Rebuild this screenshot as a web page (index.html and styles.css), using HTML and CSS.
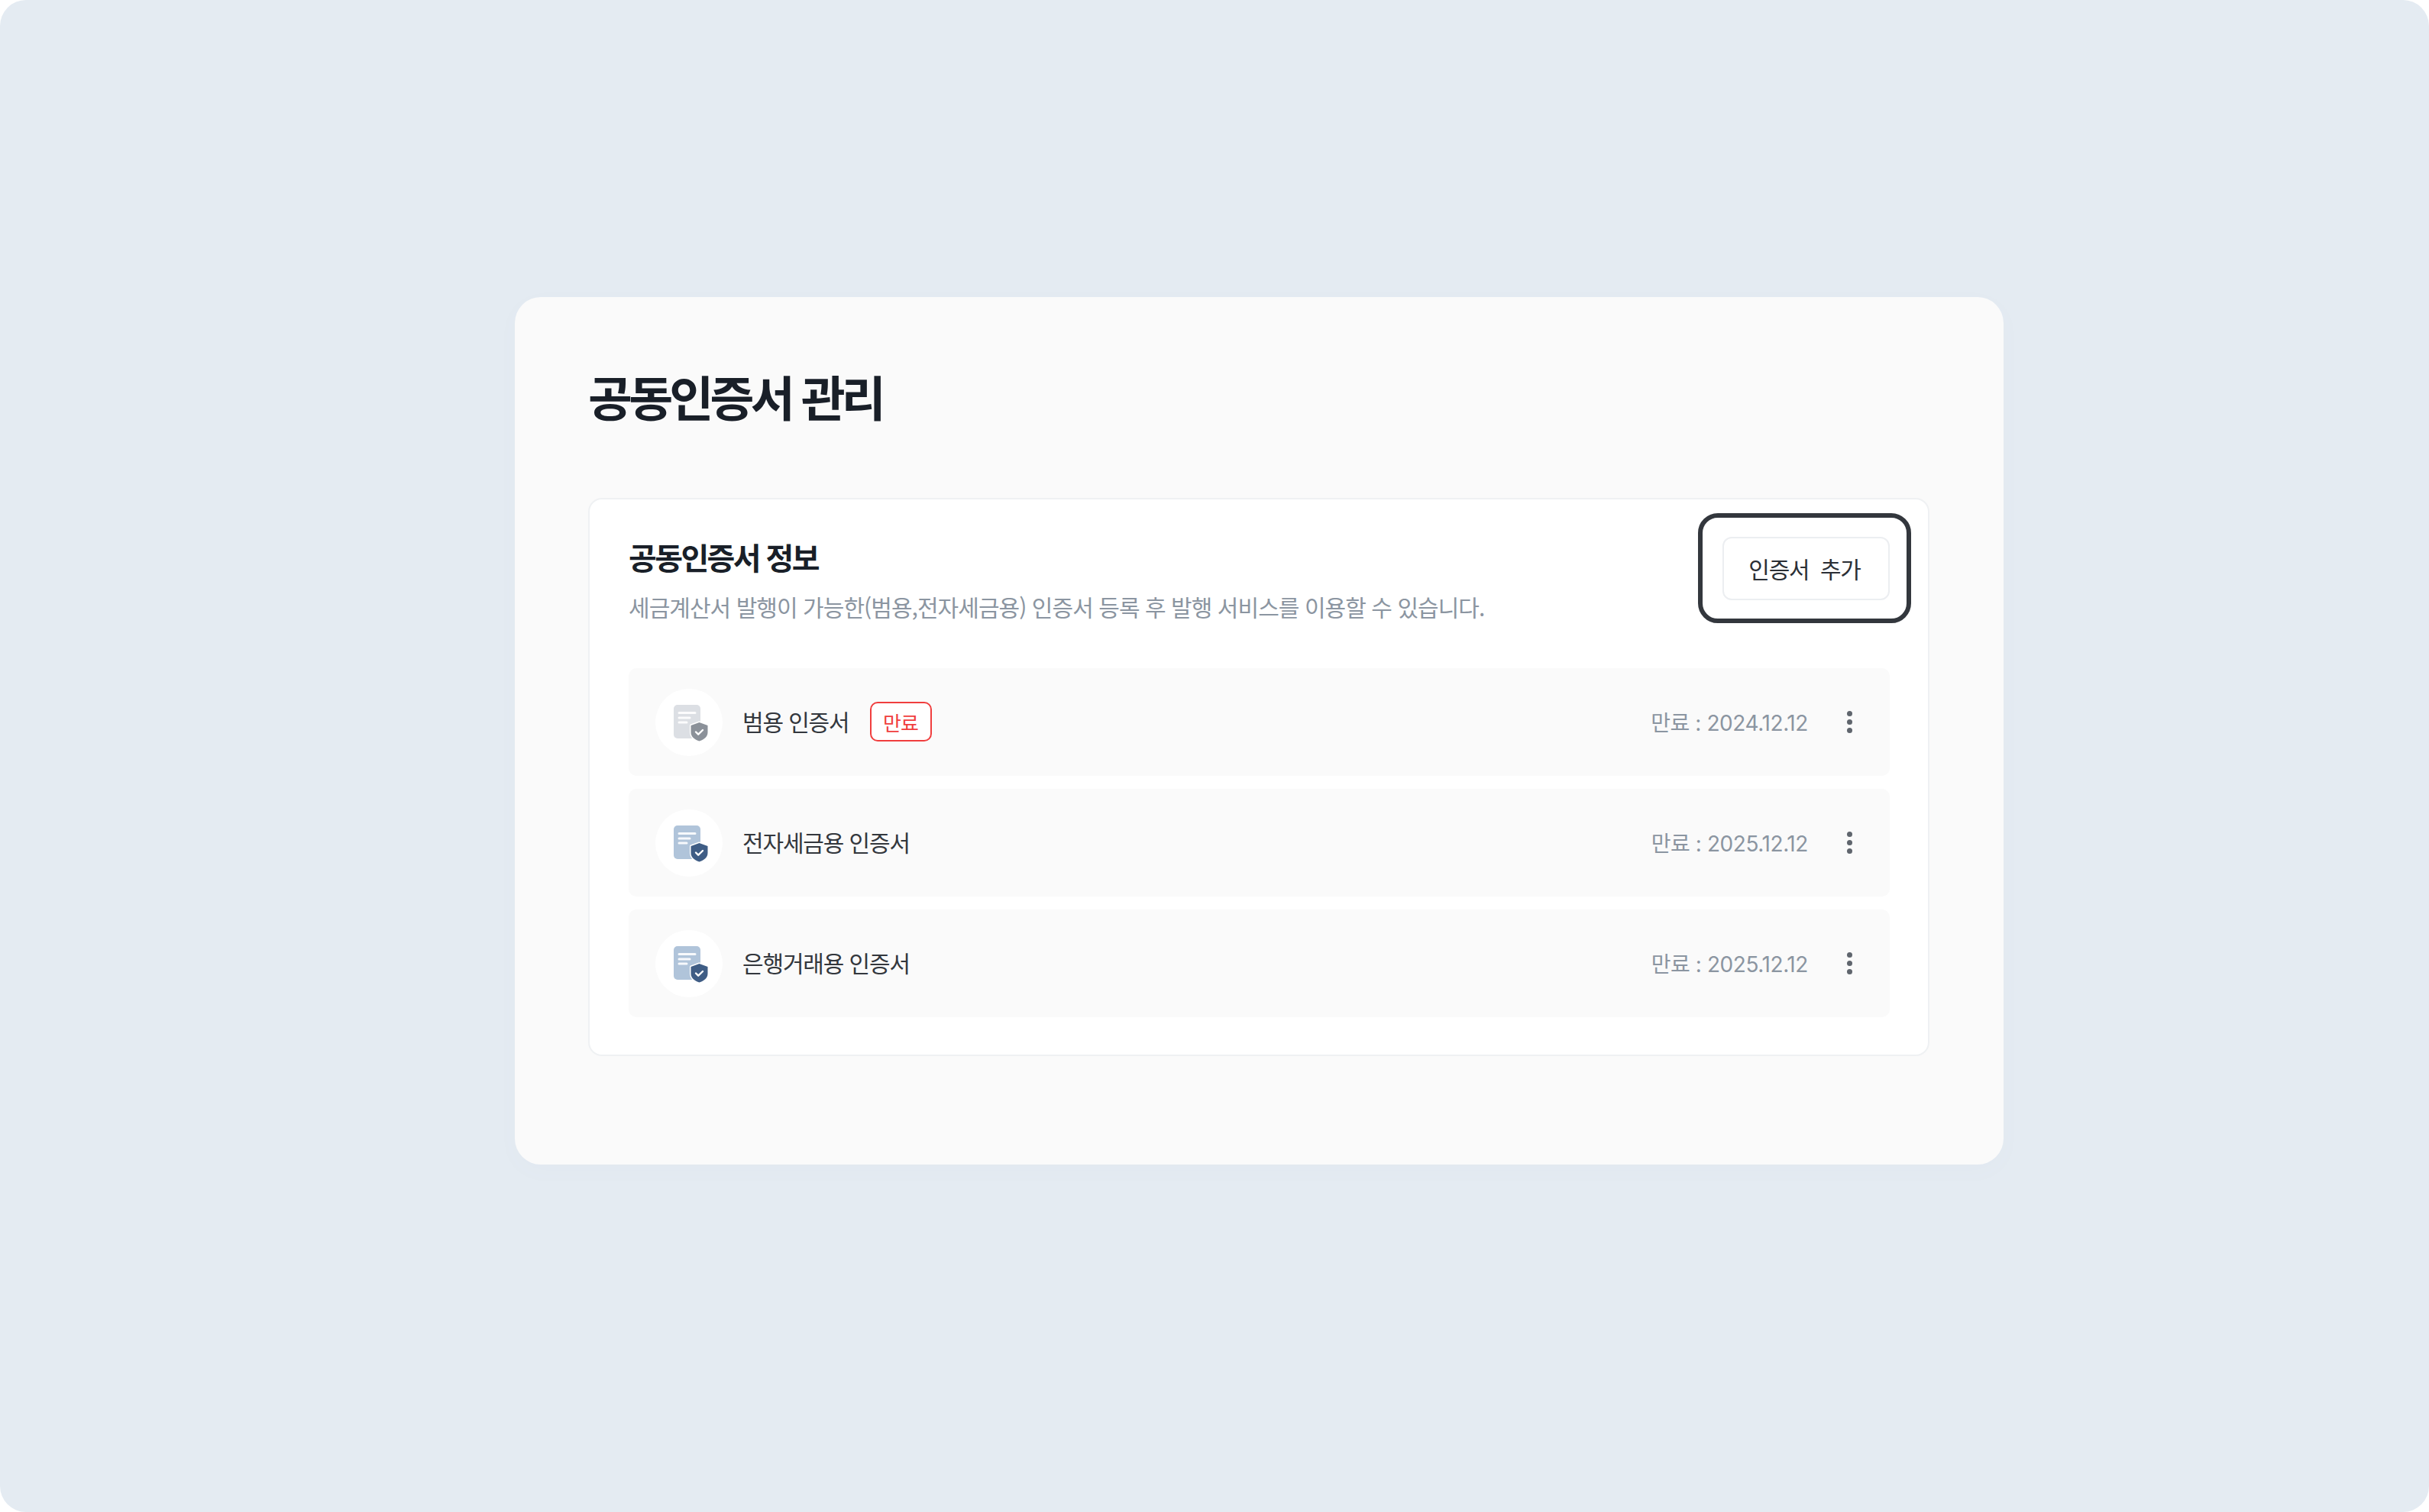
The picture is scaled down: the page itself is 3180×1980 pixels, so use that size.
FILE: index.html
```html
<!DOCTYPE html>
<html lang="ko">
<head>
<meta charset="utf-8">
<title>공동인증서 관리</title>
<link rel="stylesheet" href="styles.css">
</head>
<body>
<main class="stage">
  <section class="panel">
    <h1 class="page-title">공동인증서 관리</h1>
    <div class="info-card">
      <header class="info-head">
        <div class="info-text">
          <h2 class="info-title">공동인증서 정보</h2>
          <p class="info-desc">세금계산서 발행이 가능한(범용,전자세금용) 인증서 등록 후 발행 서비스를 이용할 수 있습니다.</p>
        </div>
        <div class="highlight"><button class="add-btn">인증서&nbsp; 추가</button></div>
      </header>
      <ul class="cert-list">
        <li class="cert-row">
          <span class="cert-icon expired">
            <svg width="48" height="50" viewBox="0 0 48 50"><rect class="doc" width="35" height="44" rx="5"/><path class="lines" d="M7 10.500h21M7 17h14M7 23h10"/><path class="shield" d="M33.500 23l11 4v9c0 6-5 9.500-11 11.500-6-2-11-5.500-11-11.500v-9z"/><path class="tick" d="M29 35.500l3.200 3.200 5.800-5.700"/></svg>
          </span>
          <span class="cert-name">범용 인증서</span>
          <span class="badge">만료</span>
          <span class="cert-date">만료 : 2024.12.12</span>
          <span class="more"><i></i><i></i><i></i></span>
        </li>
        <li class="cert-row">
          <span class="cert-icon active">
            <svg width="48" height="50" viewBox="0 0 48 50"><rect class="doc" width="35" height="44" rx="5"/><path class="lines" d="M7 10.500h21M7 17h14M7 23h10"/><path class="shield" d="M33.500 23l11 4v9c0 6-5 9.500-11 11.500-6-2-11-5.500-11-11.500v-9z"/><path class="tick" d="M29 35.500l3.200 3.200 5.800-5.700"/></svg>
          </span>
          <span class="cert-name">전자세금용 인증서</span>
          <span class="cert-date">만료 : 2025.12.12</span>
          <span class="more"><i></i><i></i><i></i></span>
        </li>
        <li class="cert-row">
          <span class="cert-icon active">
            <svg width="48" height="50" viewBox="0 0 48 50"><rect class="doc" width="35" height="44" rx="5"/><path class="lines" d="M7 10.500h21M7 17h14M7 23h10"/><path class="shield" d="M33.500 23l11 4v9c0 6-5 9.500-11 11.500-6-2-11-5.500-11-11.500v-9z"/><path class="tick" d="M29 35.500l3.200 3.200 5.800-5.700"/></svg>
          </span>
          <span class="cert-name">은행거래용 인증서</span>
          <span class="cert-date">만료 : 2025.12.12</span>
          <span class="more"><i></i><i></i><i></i></span>
        </li>
      </ul>
    </div>
  </section>
</main>
</body>
</html>
```
FILE: styles.css
```css
* { box-sizing: border-box; }
html, body { margin: 0; padding: 0; background: #fff; }
body { font-family: Inter, "Noto Sans CJK KR", sans-serif; }
.stage {
  width: 3180px;
  height: 1980px;
  background: #e4ebf2;
  border-radius: 34px;
  padding: 389px 557px 0 674px;
  overflow: hidden;
}
.panel {
  height: 1136px;
  background: #fafafa;
  border-radius: 34px;
  padding: 90px 97px 0 96px;
  box-shadow: 0 8px 30px rgba(120, 140, 170, 0.025);
}
.page-title {
  margin: 0;
  height: 79px;
  font-family: "Noto Sans CJK KR", sans-serif;
  font-size: 63px;
  line-height: 77px;
  font-weight: 700;
  letter-spacing: -4.8px;
  color: #191f28;
}
.info-card {
  margin-top: 94px;
  height: 731px;
  background: #fff;
  border: 2px solid #eff1f3;
  border-radius: 18px;
  padding: 18px 50px 0 51px;
}
.info-head {
  display: flex;
  justify-content: space-between;
  align-items: flex-start;
  height: 203px;
}
.info-text { padding-top: 29px; }
.info-title {
  margin: 0;
  font-family: "Noto Sans CJK KR", sans-serif;
  font-size: 40px;
  line-height: 56px;
  font-weight: 700;
  letter-spacing: -2.6px;
  color: #191f28;
}
.info-desc {
  margin: 15px 0 0;
  font-family: "Noto Sans CJK KR", sans-serif;
  font-size: 30px;
  line-height: 44px;
  font-weight: 400;
  letter-spacing: -0.95px;
  color: #8b95a1;
}
.highlight {
  display: flex;
  align-items: center;
  justify-content: center;
  width: 279px;
  height: 144px;
  margin-right: -28px;
  border: 6px solid #33373d;
  border-radius: 26px;
  padding-left: 3px;
}
.add-btn {
  width: 219px;
  height: 83px;
  background: #fff;
  border: 2px solid #eceef1;
  border-radius: 12px;
  font-family: "Noto Sans CJK KR", sans-serif;
  font-size: 30px;
  font-weight: 400;
  letter-spacing: -1.2px;
  color: #2b2f35;
  padding: 0 3px 0 0;
}
.cert-list {
  list-style: none;
  margin: 0;
  padding: 0;
  display: flex;
  flex-direction: column;
  gap: 17px;
}
.cert-row {
  display: flex;
  align-items: center;
  height: 141px;
  background: #fafafa;
  border-radius: 10px;
  padding: 0 0 0 35px;
}
.cert-icon {
  flex: none;
  display: flex;
  width: 88px;
  height: 88px;
  background: #fff;
  border-radius: 50%;
  padding: 21px 0 0 24px;
  margin-right: 26px;
}
.cert-icon svg { display: block; overflow: visible; }
.doc { fill: #b0c4da; }
.lines { fill: none; stroke: #fff; stroke-width: 3; stroke-linecap: round; opacity: .9; }
.shield { fill: #3f5d85; stroke: #fff; stroke-width: 3; paint-order: stroke; stroke-linejoin: round; }
.tick { fill: none; stroke: #fff; stroke-width: 2.4; stroke-linecap: round; stroke-linejoin: round; }
.expired .doc { fill: #dcdfe4; }
.expired .shield { fill: #8b9199; }
.cert-name {
  font-family: "Noto Sans CJK KR", sans-serif;
  font-size: 30px;
  line-height: 40px;
  letter-spacing: -1.15px;
  color: #33373d;
  position: relative;
  top: -2px;
}
.badge {
  display: flex;
  align-items: center;
  justify-content: center;
  width: 81px;
  height: 52px;
  margin-left: 27px;
  margin-top: -1px;
  border: 2.5px solid #f03e3e;
  border-radius: 10px;
  background: #fff;
  font-family: "Noto Sans CJK KR", sans-serif;
  font-size: 26px;
  font-weight: 400;
  letter-spacing: -1px;
  color: #f03e3e;
}
.cert-date {
  margin-left: auto;
  margin-top: -2px;
  font-size: 28px;
  letter-spacing: -0.42px;
  color: #8b95a1;
  white-space: nowrap;
}
.more {
  display: flex;
  flex-direction: column;
  align-items: center;
  gap: 4px;
  width: 8px;
  margin: 0 49px 0 50px;
}
.more i {
  display: block;
  width: 7px;
  height: 7px;
  border-radius: 50%;
  background: #5f656d;
}
```
